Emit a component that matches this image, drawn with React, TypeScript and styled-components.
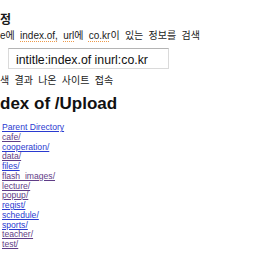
import { styled, createGlobalStyle } from "styled-components"

const GlobalStyle = createGlobalStyle`
  html, body {
    margin:0;
    padding:0;
    background:#fff;
  }
`
const Page = styled.div`
  width:276px;
  height:260px;
  overflow:hidden;
  padding-top:10px;
  box-sizing:border-box;
  font-family:"Liberation Sans", "Noto Sans CJK KR", sans-serif;
  color:#1a1a1a;
`
const Title = styled.div`
  font-family:"Noto Sans CJK KR", sans-serif;
  font-weight:700;
  font-size:12px;
  line-height:18px;
  height:18px;
`
const Line = styled.div<{ $top?: number }>`
  font-size:10px;
  line-height:15px;
  height:15px;
  white-space:nowrap;
  word-spacing:2.5px;
  margin-top:${p => p.$top || 0}px;
`
const Latin = styled.span<{ $spell?: boolean }>`
  font-family:"Liberation Sans", sans-serif;
  font-size:10px;
  text-decoration:${p => p.$spell ? "underline dotted #ee9a4a" : "none"};
  text-underline-offset:2px;
`
const Query = styled.div`
  margin:5px 0 0 8px;
  width:161px;
  height:21px;
  box-sizing:border-box;
  border:1px solid #dadada;
  border-top-color:#b4b4b4;
  padding:3px 0 0 7px;
  font-family:"Liberation Sans", sans-serif;
  font-size:12.3px;
  line-height:16px;
  color:#111;
  white-space:nowrap;
`
const Heading = styled.h1`
  margin:6px 0 0 0;
  font-family:"Liberation Sans", sans-serif;
  font-weight:700;
  font-size:17px;
  line-height:20px;
  color:#111;
`
const List = styled.ul`
  list-style:none;
  margin:9px 0 0 0;
  padding:0 0 0 2px;
  font-family:"Liberation Sans", sans-serif;
  font-size:8.6px;
  line-height:9.75px;
`
const Item = styled.li`
  height:9.75px;
`
const DirLink = styled.a<{ $visited?: boolean }>`
  color:${p => p.$visited ? "#5f3c86" : "#2a3ad0"};
  text-decoration:underline;
`

const entries: [string, boolean][] = [
  ["Parent Directory", false],
  ["cafe/", true],
  ["cooperation/", false],
  ["data/", true],
  ["files/", false],
  ["flash_images/", true],
  ["lecture/", true],
  ["popup/", true],
  ["regist/", false],
  ["schedule/", false],
  ["sports/", false],
  ["teacher/", true],
  ["test/", true],
]

const App: React.FC = () => {
  return (
    <Page>
      <GlobalStyle />
      <Title>정</Title>
      <Line>
        <Latin>e</Latin>에 <Latin $spell>index.of,</Latin> <Latin $spell>url</Latin>에 <Latin $spell>co.kr</Latin>이 있는 정보를 검색
      </Line>
      <Query>intitle:index.of inurl:co.kr</Query>
      <Line $top={4}>색 결과 나온 사이트 접속</Line>
      <Heading>dex of /Upload</Heading>
      <List>
        {entries.map(([name, visited]) => (
          <Item key={name}>
            <DirLink href="#" $visited={visited}>{name}</DirLink>
          </Item>
        ))}
      </List>
    </Page>
  )
}
export default App
